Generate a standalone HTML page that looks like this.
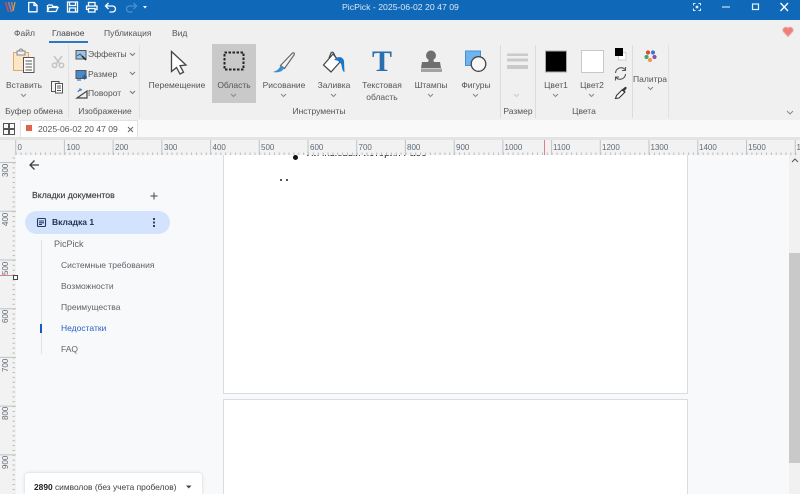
<!DOCTYPE html>
<html lang="ru"><head><meta charset="utf-8"><title>PicPick</title>
<style>
html,body{margin:0;padding:0;width:800px;height:494px;overflow:hidden;background:#f8f9fb;font-family:"Liberation Sans","DejaVu Sans",sans-serif;}
.a{position:absolute;white-space:nowrap}
.t{position:absolute;white-space:nowrap;font-size:8.5px;color:#555;line-height:12px}
.c{transform:translateX(-50%)}
svg{position:absolute;overflow:visible}
.s{position:absolute;white-space:nowrap;font-size:8.5px;color:#5f6368;line-height:12px}
</style></head><body>
<div class="a" style="left:0;top:0;width:800px;height:20px;background:#0f69b8"></div>
<div class="a" style="left:0;top:20px;width:800px;height:100px;background:#f0f0f0"></div>
<div class="a" style="left:0;top:120px;width:800px;height:17px;background:#f9f9f9"></div>
<div class="a" style="left:0;top:137px;width:800px;height:3px;background:#e4e4e4"></div>
<div class="a" style="left:0;top:140px;width:800px;height:15px;background:#f2f2f2"></div>
<div class="a" style="left:0;top:155px;width:16px;height:339px;background:#f2f2f2"></div>

<!-- title bar icons -->
<svg style="left:0;top:0" width="800" height="20" fill="none">
<path d="M5.500 2l3 10" stroke="#c8504a" stroke-width="1.500"/><path d="M8.500 2l3 10" stroke="#9a7fa0" stroke-width="1.500"/><path d="M11.500 2l2 9" stroke="#d2706a" stroke-width="1.500"/><path d="M15 2l-2 9" stroke="#d9a23f" stroke-width="1.200"/>
<g stroke="#fff" stroke-width="1.300">
<path d="M28.700 2.500h5.500l2.800 2.800v6.500h-8.300zM34 2.500v3h3"/>
<path d="M48 5h4l1 1.500h4v1.500M47.500 11.500l1.500-4h9l-2 4h-8.500zM47.500 11.500v-6.500"/>
<path d="M67.500 2h10v10h-10zM69.500 2v3.500h6v-3.500M69.500 12v-4h6v4"/>
<path d="M88.500 6v-3.500h6.500v3.500M88.500 9.500h-2v-3.500h10.500v3.500h-2M88.500 8.500h6.500v3.500h-6.500z"/>
<path d="M105.500 6h7a3 3 0 0 1 0 6h-3M108.500 3l-3 3 3 3"/>
</g>
<path d="M136.500 6h-7a3 3 0 0 0 0 6h3M133.500 3l3 3-3 3" stroke="#4d8fcf" stroke-width="1.300"/>
<path d="M143 6h4l-2 2.500z" fill="#fff"/>
<path d="M695.500 3.500h-2v2M698.500 3.500h2v2M695.500 10.500h-2v-2M698.500 10.500h2v-2" stroke="#dfeaf5" stroke-width="1"/><circle cx="697" cy="7" r="1.400" fill="#dfeaf5"/>
<path d="M722 7h8" stroke="#cfe0f1" stroke-width="1.200"/>
<rect x="752.500" y="4" width="6" height="5.500" stroke="#e8f0f8" stroke-width="1.200"/>
<path d="M780.500 3l7.500 8M788 3l-7.500 8" stroke="#fff" stroke-width="1.300"/>
</svg>
<div class="a" style="left:342px;top:1px;font-size:8.7px;line-height:13px;color:#dbe8f5">PicPick - 2025-06-02 20 47 09</div>

<!-- tabs -->
<div class="t" style="left:14px;top:27px;">Файл</div>
<div class="t" style="left:52px;top:27px;color:#444">Главное</div>
<div class="a" style="left:49px;top:41px;width:39px;height:2px;background:#2b79c2"></div>
<div class="t" style="left:104px;top:27px;">Публикация</div>
<div class="t" style="left:172px;top:27px;">Вид</div>
<svg style="left:781px;top:24px" width="14" height="14"><path d="M7 12.500L2.300 7.500a2.900 2.900 0 0 1 4.700-3.300A2.900 2.900 0 0 1 11.700 7.500z" fill="#ee8078" stroke="#e8a59f"/></svg>

<!-- ribbon separators -->
<div class="a" style="left:68px;top:45px;width:1px;height:73px;background:#e2e2e2"></div>
<div class="a" style="left:139px;top:45px;width:1px;height:73px;background:#e2e2e2"></div>
<div class="a" style="left:500px;top:45px;width:1px;height:73px;background:#dcdcdc"></div>
<div class="a" style="left:535px;top:45px;width:1px;height:73px;background:#dcdcdc"></div>
<div class="a" style="left:632px;top:45px;width:1px;height:73px;background:#dcdcdc"></div>
<div class="a" style="left:668px;top:45px;width:1px;height:73px;background:#e2e2e2"></div>

<!-- selected tool -->
<div class="a" style="left:212px;top:44px;width:44px;height:59px;background:#c9c9c9"></div>

<svg style="left:0;top:40px" width="800" height="80" fill="none">
<!-- clipboard -->
<path d="M13.500 12.500h15v18h-15z" fill="#fbe6c8" stroke="#e5a860"/><path d="M17 11h8v4h-8zM19 11a2 2 0 0 1 4 0" fill="#f2f2f2" stroke="#888"/>
<path d="M23.500 17.500h10.500v15h-10.500z" fill="#fff" stroke="#555"/><path d="M25.500 21h6.500M25.500 24h6.500M25.500 27h6.500M25.500 30h6.500" stroke="#555"/>
<!-- cut -->
<path d="M54 16l6 8M62 16l-6 8" stroke="#c4c4c4" stroke-width="1.500"/><circle cx="54.500" cy="25.300" r="2.200" stroke="#c4c4c4" stroke-width="1.500"/><circle cx="61.500" cy="25.300" r="2.200" stroke="#c4c4c4" stroke-width="1.500"/>
<!-- copy -->
<path d="M51.500 41.500h7.500v10h-7.500z" fill="#f5f5f5" stroke="#555"/><path d="M55.500 43.500h7v9.500h-7z" fill="#fff" stroke="#555"/><path d="M57 46h4M57 48h4M57 50.500h4" stroke="#555"/>
<!-- effects -->
<rect x="76" y="10.500" width="10" height="8.500" fill="#9cc3e4" stroke="#555"/><path d="M77 16l3-2 3 3" stroke="#2f5b86"/><path d="M82 16l4 4" stroke="#222" stroke-width="1.500"/>
<rect x="76" y="30.500" width="10" height="8" fill="#4a89c7" stroke="#555"/><path d="M82 37h5M84.500 34.500v5" stroke="#1d5f9e" stroke-width="1.300"/><path d="M77 40h4" stroke="#1d5f9e"/>
<path d="M77 58l10-7v7z" stroke="#444" stroke-width="1.200"/><path d="M78 52a3 3 0 0 1 4-2" stroke="#2f7fc8" stroke-width="1.300"/><path d="M80 48v3" stroke="#2f7fc8"/>
<g stroke="#777" stroke-width="1">
<path d="M130 13l2.500 2.500 2.500-2.500M130 32l2.500 2.500 2.500-2.500M130 51l2.500 2.500 2.500-2.500"/>
</g>
<g stroke="#888" stroke-width="1">
<path d="M21 54l2.500 2.500 2.500-2.500M231 54l2.500 2.500 2.500-2.500M281 54l2.500 2.500 2.500-2.500M331 54l2.500 2.500 2.500-2.500M428 54l2.500 2.500 2.500-2.500M473 54l2.500 2.500 2.500-2.500M553 54l2.500 2.500 2.500-2.500M589 54l2.500 2.500 2.500-2.500M648 47l2.500 2.500 2.500-2.500M787 71l3 3 3-3"/>
</g>
<path d="M514 54l2.500 2.500 2.500-2.500" stroke="#ccc"/>
<!-- pointer -->
<path d="M171.500 11.500v20l5-4 3.500 6.500 3.500-1.800-3.500-6.500 6-.7z" fill="#fff" stroke="#444" stroke-width="1.300"/>
<!-- selection -->
<rect x="224.500" y="12.500" width="19" height="17" stroke="#222" stroke-width="2" stroke-dasharray="2.500 1.500"/>
<!-- brush -->
<path d="M280.500 25.500l11.500-12c1.500-1.500 3-.5 2 1.500l-9.500 13.500z" fill="#f4f4f4" stroke="#666" stroke-width="1.200"/>
<path d="M280.500 25.500c-1 3-3 5-7.500 6.500 4.500 1 9.500 0 11-4z" fill="#3b8fd0"/>
<!-- fill -->
<path d="M323.500 25l9.500-11 7 8-9 10z" fill="#fff" stroke="#444" stroke-width="1.200"/><path d="M329 18l2-5c.5-1 2-1 2.500 0l2.500 5" stroke="#444" stroke-width="1.200"/><path d="M334 20c3-4 9-4 10 1l.5 11c-1.500 0-2.500-3-3-7-1-3-4-5-7.500-5z" fill="#1976c8"/>
<!-- stamp -->
<circle cx="431" cy="15.500" r="5" fill="#6f6f6f"/><path d="M429 19h4l1 3h-6z" fill="#6f6f6f"/><path d="M421 28l1-6h18l1 6z" fill="#6f6f6f"/><rect x="421" y="28.500" width="21" height="3.500" fill="#a3a3a3"/>
<!-- shapes -->
<rect x="465.500" y="11" width="15" height="14.500" fill="#6fb4ee" stroke="#4a90d0"/><circle cx="478.500" cy="24" r="7.300" fill="#f7f7f7" stroke="#444" stroke-width="1.300"/>
<!-- size lines -->
<rect x="507" y="13.500" width="21" height="2.500" fill="#cacaca"/><rect x="507" y="18.500" width="21" height="3" fill="#cacaca"/><rect x="507" y="25" width="21" height="4" fill="#cacaca"/>
<!-- colours -->
<rect x="545.500" y="11" width="21" height="21" fill="#000" stroke="#aaa"/>
<rect x="581.500" y="10.500" width="22" height="22" fill="#fff" stroke="#c8c8c8"/>
<rect x="618.500" y="12.500" width="7.500" height="7.500" fill="#fff" stroke="#ccc"/><rect x="615" y="8" width="8" height="8" fill="#000"/>
<path d="M615.500 33a5.500 5.500 0 0 1 9.500-3.500M625.500 27v3.500h-3.500M625.500 34a5.500 5.500 0 0 1-9.500 3.500M615.500 40.500v-3.500h3.500" stroke="#555" stroke-width="1.100"/>
<path d="M615.500 58.500l1-3 6-6 2.500 2.500-6 6z" fill="#fff" stroke="#333" stroke-width="1.100"/><path d="M621.500 50l3.500-3c1-.5 2 .5 1.500 1.500l-3 3.500z" fill="#333"/>
<!-- palette -->
<circle cx="648" cy="12.500" r="2.100" fill="#e0453a"/><circle cx="653" cy="12.500" r="2.100" fill="#3b78c4"/><circle cx="646.500" cy="17" r="2.100" fill="#3fa76b"/><circle cx="654.500" cy="17" r="2.100" fill="#8a4fb0"/><circle cx="650" cy="20" r="2.100" fill="#eb9a47"/>
</svg>

<!-- ribbon text -->
<div class="t c" style="left:24px;top:79px">Вставить</div>
<div class="t" style="left:88px;top:48px">Эффекты</div>
<div class="t" style="left:88px;top:68px">Размер</div>
<div class="t" style="left:88px;top:87px">Поворот</div>
<div class="t c" style="left:177px;top:79px">Перемещение</div>
<div class="t c" style="left:234px;top:79px">Область</div>
<div class="t c" style="left:284px;top:79px">Рисование</div>
<div class="t c" style="left:334px;top:79px">Заливка</div>
<div class="t c" style="left:382px;top:79px">Текстовая</div>
<div class="t c" style="left:382px;top:91px">область</div>
<div class="a" style="left:382px;top:45px;transform:translateX(-50%);font-family:'Liberation Serif',serif;font-weight:bold;font-size:30px;line-height:34px;color:#2a6fb0">T</div>
<div class="t c" style="left:431px;top:79px">Штампы</div>
<div class="t c" style="left:476px;top:79px">Фигуры</div>
<div class="t c" style="left:556px;top:79px">Цвет1</div>
<div class="t c" style="left:592px;top:79px">Цвет2</div>
<div class="t c" style="left:650px;top:73px">Палитра</div>
<div class="t c" style="left:34px;top:105px">Буфер обмена</div>
<div class="t c" style="left:105px;top:105px">Изображение</div>
<div class="t c" style="left:319px;top:105px">Инструменты</div>
<div class="t c" style="left:518px;top:105px">Размер</div>
<div class="t c" style="left:584px;top:105px">Цвета</div>

<!-- doc tab bar -->
<svg style="left:3px;top:123px" width="13" height="13" fill="none" stroke="#555"><rect x=".5" y=".5" width="5" height="5"/><rect x="6.500" y=".5" width="5" height="5"/><rect x=".5" y="6.500" width="5" height="5"/><rect x="6.500" y="6.500" width="5" height="5"/></svg>
<div class="a" style="left:20px;top:120px;width:118px;height:17px;background:#fff;border:1px solid #e2e2e2;border-bottom:none;box-sizing:border-box"></div>
<div class="a" style="left:26px;top:125px;width:6px;height:6px;background:#e0614c"></div>
<div class="t" style="left:38px;top:123px;color:#555;font-size:8.600px">2025-06-02 20 47 09</div>
<svg style="left:127px;top:126px" width="8" height="8" stroke="#666" fill="none"><path d="M1 1l5 5M6 1l-5 5"/></svg>

<!-- top ruler -->
<svg style="left:0;top:140px" width="800" height="15" fill="none">
<defs><pattern id="h" width="4.872" height="15" x="15.700" patternUnits="userSpaceOnUse"><rect x="0" y="12.500" width="1" height="2.500" fill="#bcbcbc"/></pattern></defs>
<rect x="16" width="784" height="15" fill="url(#h)"/>
<path d="M15.700 0v15M64.400 0v15M113.100 0v15M161.800 0v15M210.600 0v15M259.300 0v15M308 0v15M356.700 0v15M405.400 0v15M454.200 0v15M502.900 0v15M551.600 0v15M600.300 0v15M649 0v15M697.800 0v15M746.500 0v15M795.200 0v15" stroke="#c2c2c2"/>
<path d="M544.500 0v15" stroke="#d9808a"/>
<g font-size="8" fill="#5d6b78" font-family="Liberation Sans, sans-serif">
<text x="17.500" y="10">0</text><text x="66.500" y="10">100</text><text x="115" y="10">200</text><text x="164" y="10">300</text><text x="212.500" y="10">400</text><text x="261" y="10">500</text><text x="310" y="10">600</text><text x="358.500" y="10">700</text><text x="407" y="10">800</text><text x="456" y="10">900</text><text x="504.500" y="10">1000</text><text x="553" y="10">1100</text><text x="602" y="10">1200</text><text x="650.500" y="10">1300</text><text x="699" y="10">1400</text><text x="748" y="10">1500</text><text x="796.500" y="10">1600</text>
</g>
</svg>

<!-- left ruler -->
<svg style="left:0;top:155px" width="16" height="339" fill="none">
<defs><pattern id="v" width="16" height="4.872" y="7.500" patternUnits="userSpaceOnUse"><rect x="12.500" y="0" width="2.500" height="1" fill="#bcbcbc"/></pattern></defs>
<rect width="16" height="339" fill="url(#v)"/>
<path d="M0 7.500h16M0 56.200h16M0 105h16M0 153.700h16M0 202.400h16M0 251.100h16M0 299.900h16" stroke="#c2c2c2"/>
<path d="M0 120.500h16" stroke="#d9808a"/>
<g font-size="8" fill="#5d6b78" font-family="Liberation Sans, sans-serif">
<text transform="translate(8 22) rotate(-90)">300</text>
<text transform="translate(8 71) rotate(-90)">400</text>
<text transform="translate(8 120) rotate(-90)">500</text>
<text transform="translate(8 168) rotate(-90)">600</text>
<text transform="translate(8 217) rotate(-90)">700</text>
<text transform="translate(8 265) rotate(-90)">800</text>
<text transform="translate(8 314) rotate(-90)">900</text>
</g>
</svg>
<div class="a" style="left:13px;top:275px;background:#fff;border:1px solid #444;box-sizing:content-box;width:3px;height:3px"></div>

<!-- document pane -->
<div class="a" style="left:223px;top:155px;width:465px;height:239px;background:#fff;border:1px solid #dadce0;border-top:none;box-sizing:border-box"></div>
<div class="a" style="left:223px;top:399px;width:465px;height:95px;background:#fff;border:1px solid #dadce0;border-bottom:none;box-sizing:border-box"></div>
<div class="a" style="left:293px;top:155px;width:5px;height:5px;background:#111;border-radius:50%"></div>
<div class="a" style="left:307px;top:155px;height:4px;width:120px;overflow:hidden"><div style="margin-top:-7px;font-size:10px;line-height:12px;color:#222;white-space:nowrap">Личныевый история Рабочий</div></div>
<div class="a" style="left:280px;top:179px;width:2px;height:2px;background:#555"></div>
<div class="a" style="left:286px;top:179px;width:2px;height:2px;background:#555"></div>

<!-- scrollbar -->
<div class="a" style="left:789px;top:155px;width:11px;height:339px;background:#f1f1f1"></div>
<div class="a" style="left:789px;top:253px;width:11px;height:210px;background:#c9c9c9"></div>
<svg style="left:791px;top:158px" width="8" height="6" fill="none" stroke="#555"><path d="M1 4l3-3 3 3"/></svg>

<!-- side panel -->
<svg style="left:28px;top:158px" width="14" height="14" fill="none" stroke="#3c4043" stroke-width="1.300"><path d="M11 7H2M6.500 2.500L2 7l4.500 4.500"/></svg>
<div class="a" style="left:32px;top:189px;font-size:8.700px;line-height:12px;color:#3c4043;-webkit-text-stroke:.15px #3c4043">Вкладки документов</div>
<svg style="left:150px;top:192px" width="8" height="8" stroke="#5f6368" stroke-width="1.200"><path d="M4 .5v7M.5 4h7"/></svg>
<div class="a" style="left:25px;top:211px;width:145px;height:23px;background:#d3e3fd;border-radius:12px"></div>
<svg style="left:37px;top:218px" width="9" height="9" fill="none" stroke="#1f3864" stroke-width="1.100"><rect x=".5" y=".5" width="8" height="8" rx="1"/><path d="M2 3h5M2 4.800h5M2 6.500h3"/></svg>
<div class="a" style="left:52px;top:216px;font-size:8.500px;line-height:12px;font-weight:bold;color:#1f2f4f">Вкладка 1</div>
<div class="a" style="left:153px;top:218px;width:2px;height:2px;background:#3c4043;box-shadow:0 3.500px 0 #3c4043,0 7px 0 #3c4043"></div>
<div class="a" style="left:41px;top:240px;width:1px;height:114px;background:#dfe1e5"></div>
<div class="a" style="left:40px;top:324px;width:2px;height:9px;background:#1a56c4"></div>
<div class="s" style="left:54px;top:238px;font-size:9px">PicPick</div>
<div class="s" style="left:61px;top:259px">Системные требования</div>
<div class="s" style="left:61px;top:280px">Возможности</div>
<div class="s" style="left:61px;top:301px">Преимущества</div>
<div class="s" style="left:61px;top:322px;color:#2a5fc4">Недостатки</div>
<div class="s" style="left:61px;top:343px">FAQ</div>

<!-- word count -->
<div class="a" style="left:25px;top:473px;width:177px;height:21px;background:#fff;border-radius:3px 3px 0 0;box-shadow:0 0 3px rgba(60,64,67,.22)"></div>
<div class="a" style="left:34px;top:481px;font-size:8.400px;line-height:12px;color:#3c4043"><b style="color:#202124">2890</b> символов (без учета пробелов)</div>
<svg style="left:186px;top:485px" width="6" height="4"><path d="M0 .5h5.500L2.750 3.500z" fill="#444"/></svg>
</body></html>
